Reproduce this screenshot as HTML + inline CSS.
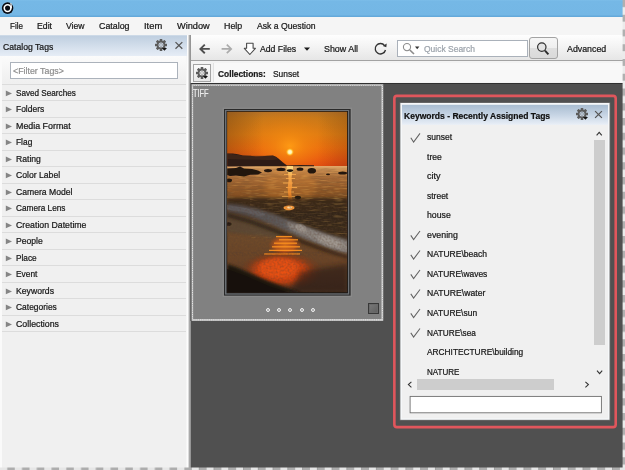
<!DOCTYPE html>
<html>
<head>
<meta charset="utf-8">
<title>Catalog</title>
<style>
html,body{margin:0;padding:0;}
body{width:625px;height:470px;overflow:hidden;position:relative;background:#505050;font-family:"Liberation Sans",sans-serif;font-size:10px;color:#1e1e1e;}
.abs{position:absolute;}
.t{position:absolute;display:block;white-space:nowrap;line-height:12px;height:12px;transform-origin:0 50%;-webkit-text-stroke:0.22px currentColor;}
.ln{position:absolute;left:2px;width:184px;height:1px;background:#dcdcdc;}
#title{left:0;top:0;width:625px;height:17px;background:linear-gradient(#7cbde9 0,#75b8e6 1.5px,#74b7e5 15px,#64a9da 16px,#64a9da 17px);}
#menu{left:0;top:17px;width:625px;height:18px;background:#f5f5f5;}
#side{left:0;top:35px;width:189px;height:435px;background:#f0f0f0;}
#sideL{left:0;top:35px;width:2px;height:435px;background:#fafafa;}
#sideR{left:186px;top:35px;width:2px;height:435px;background:linear-gradient(90deg,#f4f4f4,#fff);}
#sidehdr{left:0;top:35px;width:187px;height:21px;background:linear-gradient(#dbe4ee 0,#bfcfe0 1px,#e6edf6 100%);}
#filterbg{left:2px;top:56px;width:184px;height:27px;background:linear-gradient(#fbfbfb,#efefef);}
#filter{left:10px;top:62px;width:168px;height:17px;background:#fff;border:1px solid #abb2bb;box-sizing:border-box;}
#vsep{left:188px;top:35px;width:3px;height:435px;background:linear-gradient(90deg,#dadada 0,#dadada 1px,#aaa 1px,#aaa 2px,#969696 2px);}
#tool{left:191px;top:35px;width:434px;height:25px;background:linear-gradient(#fefefe,#f4f4f4 45%,#e6e6e6);}
#toolb{left:191px;top:60px;width:434px;height:1px;background:#a2a2a2;}
#coll{left:191px;top:61px;width:434px;height:22px;background:#f3f3f3;}
#collb{left:191px;top:83px;width:434px;height:1px;background:#303030;}
#gbtn{left:193px;top:64px;width:18px;height:18px;box-sizing:border-box;border:1px solid #a4a4a4;background:linear-gradient(#fafafa,#e8e8e8);}
#crumb{left:213px;top:63px;width:412px;height:19px;background:#f8f8f8;border-left:1px solid #e2e2e2;}
#thumb{left:191px;top:84px;width:192px;height:237px;background:#808080;border:1px solid #c9c9c9;box-sizing:border-box;}
#thumbd{left:193px;top:86px;width:188px;height:233px;border:1px dashed #ededed;box-sizing:border-box;}
#frame{left:224px;top:109px;width:127px;height:187px;background:#2c2c2c;}
#frame2{left:225px;top:110px;width:125px;height:185px;background:#666;}
#frame3{left:227px;top:112px;width:121px;height:181px;background:#1c1c1c;}
#chk{left:368px;top:303px;width:11px;height:11px;box-sizing:border-box;border:1px solid #383838;background:linear-gradient(135deg,#7a7a7a,#5e5e5e);box-shadow:inset 0 0 0 1px #6a6a6a;}
.dot{position:absolute;top:308px;width:4px;height:4px;box-sizing:border-box;border:1px solid #f0f0f0;border-radius:2px;background:#999;}
#pred{left:393px;top:95px;width:224px;height:334px;border:3px solid #d95a5e;border-radius:4px;box-sizing:border-box;}
#panel{left:400px;top:103px;width:210px;height:317px;background:#f0f0f0;border:1px solid #e4e4e4;border-top:2px solid #ececec;box-sizing:border-box;}
#phdr{left:401px;top:105px;width:208px;height:20px;background:linear-gradient(#bccce0,#e8eef7);}
#vtrack{left:593px;top:126px;width:12px;height:252px;background:#f0f0f0;}
#vthumb{left:594px;top:140px;width:11px;height:205px;background:#cdcdcd;}
#hthumb{left:417px;top:379px;width:137px;height:11px;background:#cdcdcd;}

#sbox{left:397px;top:40px;width:131px;height:17px;background:#fff;border:1px solid #aab1ba;box-sizing:border-box;}
#sbtn{left:529px;top:37px;width:29px;height:22px;box-sizing:border-box;border:1px solid #a3a3a3;border-radius:3px;background:linear-gradient(#f6f6f6 0,#efefef 48%,#dfdfdf 52%,#dadada 100%);}
</style>
</head>
<body>
<div id="title" class="abs"></div>
<svg class="abs" style="left:0;top:0" width="17" height="17" viewBox="0 0 17 17"><circle cx="7.6" cy="8.1" r="6.3" fill="#8cc6ee" opacity=".6"/><circle cx="7.6" cy="8.1" r="5.8" fill="#080c14"/><circle cx="7.6" cy="8.1" r="3.35" fill="none" stroke="#fff" stroke-width="1.6"/><path d="M11.35 8.100 C11.5 6.200 11.300 4.600 10.700 3.100" stroke="#fff" stroke-width="1.15" fill="none"/></svg>
<div id="menu" class="abs"></div>
<div id="side" class="abs"></div>
<div id="sideL" class="abs"></div>
<div id="sideR" class="abs"></div>
<div id="sidehdr" class="abs"></div>
<div id="filterbg" class="abs"></div>
<div id="filter" class="abs"></div>
<div class="ln" style="top:83.5px"></div>
<div class="ln" style="top:100.0px"></div>
<div class="ln" style="top:116.5px"></div>
<div class="ln" style="top:133.0px"></div>
<div class="ln" style="top:149.5px"></div>
<div class="ln" style="top:166.0px"></div>
<div class="ln" style="top:182.5px"></div>
<div class="ln" style="top:199.0px"></div>
<div class="ln" style="top:215.5px"></div>
<div class="ln" style="top:232.0px"></div>
<div class="ln" style="top:248.5px"></div>
<div class="ln" style="top:265.0px"></div>
<div class="ln" style="top:281.5px"></div>
<div class="ln" style="top:298.0px"></div>
<div class="ln" style="top:314.5px"></div>
<div class="ln" style="top:331.0px"></div>
<svg class="abs" style="left:5px;top:89.9px" width="8" height="8" viewBox="0 0 8 8"><path d="M0.8 0.6 L7 3.4 L0.8 6.2 Z" fill="#858585"/></svg>
<svg class="abs" style="left:5px;top:106.4px" width="8" height="8" viewBox="0 0 8 8"><path d="M0.8 0.6 L7 3.4 L0.8 6.2 Z" fill="#858585"/></svg>
<svg class="abs" style="left:5px;top:122.9px" width="8" height="8" viewBox="0 0 8 8"><path d="M0.8 0.6 L7 3.4 L0.8 6.2 Z" fill="#858585"/></svg>
<svg class="abs" style="left:5px;top:139.4px" width="8" height="8" viewBox="0 0 8 8"><path d="M0.8 0.6 L7 3.4 L0.8 6.2 Z" fill="#858585"/></svg>
<svg class="abs" style="left:5px;top:155.9px" width="8" height="8" viewBox="0 0 8 8"><path d="M0.8 0.6 L7 3.4 L0.8 6.2 Z" fill="#858585"/></svg>
<svg class="abs" style="left:5px;top:172.4px" width="8" height="8" viewBox="0 0 8 8"><path d="M0.8 0.6 L7 3.4 L0.8 6.2 Z" fill="#858585"/></svg>
<svg class="abs" style="left:5px;top:188.9px" width="8" height="8" viewBox="0 0 8 8"><path d="M0.8 0.6 L7 3.4 L0.8 6.2 Z" fill="#858585"/></svg>
<svg class="abs" style="left:5px;top:205.4px" width="8" height="8" viewBox="0 0 8 8"><path d="M0.8 0.6 L7 3.4 L0.8 6.2 Z" fill="#858585"/></svg>
<svg class="abs" style="left:5px;top:221.9px" width="8" height="8" viewBox="0 0 8 8"><path d="M0.8 0.6 L7 3.4 L0.8 6.2 Z" fill="#858585"/></svg>
<svg class="abs" style="left:5px;top:238.4px" width="8" height="8" viewBox="0 0 8 8"><path d="M0.8 0.6 L7 3.4 L0.8 6.2 Z" fill="#858585"/></svg>
<svg class="abs" style="left:5px;top:254.9px" width="8" height="8" viewBox="0 0 8 8"><path d="M0.8 0.6 L7 3.4 L0.8 6.2 Z" fill="#858585"/></svg>
<svg class="abs" style="left:5px;top:271.4px" width="8" height="8" viewBox="0 0 8 8"><path d="M0.8 0.6 L7 3.4 L0.8 6.2 Z" fill="#858585"/></svg>
<svg class="abs" style="left:5px;top:287.9px" width="8" height="8" viewBox="0 0 8 8"><path d="M0.8 0.6 L7 3.4 L0.8 6.2 Z" fill="#858585"/></svg>
<svg class="abs" style="left:5px;top:304.4px" width="8" height="8" viewBox="0 0 8 8"><path d="M0.8 0.6 L7 3.4 L0.8 6.2 Z" fill="#858585"/></svg>
<svg class="abs" style="left:5px;top:320.9px" width="8" height="8" viewBox="0 0 8 8"><path d="M0.8 0.6 L7 3.4 L0.8 6.2 Z" fill="#858585"/></svg>
<div id="vsep" class="abs"></div>
<div id="tool" class="abs"></div>
<div id="toolb" class="abs"></div>
<div id="coll" class="abs"></div>
<div id="crumb" class="abs"></div>
<div id="collb" class="abs"></div>
<div id="gbtn" class="abs"></div>
<div id="sbox" class="abs"></div>
<div id="sbtn" class="abs"></div>
<svg class="abs" style="left:0;top:0;overflow:visible" width="1" height="1">
<!-- back / forward arrows -->
<path d="M209.8 48.9 H201 M204.8 44.6 L200.4 48.9 L204.8 53.2" stroke="#4e4e4e" stroke-width="1.9" fill="none"/>
<path d="M221.6 48.9 H230.6 M226.8 44.6 L231.2 48.9 L226.8 53.2" stroke="#ababab" stroke-width="1.7" fill="none"/>
<!-- add files -->
<path d="M246.6 43.3 H253.1 V48.3 H255.4 L249.85 54.5 L244.3 48.3 H246.6 Z" fill="#fff" stroke="#4a4a4a" stroke-width="1.1" stroke-linejoin="round"/>
<path d="M304 47.4 H310 L307 50.8 Z" fill="#1a1a1a"/>
<!-- refresh -->
<path d="M384.6 45.6 A5.2 5.2 0 1 0 385.5 50" stroke="#333" stroke-width="1.35" fill="none"/>
<path d="M386.7 43.4 L386.3 47.3 L382.8 46 Z" fill="#333"/>
<!-- quick search magnifier -->
<circle cx="407" cy="47.1" r="3.6" fill="none" stroke="#8c8c8c" stroke-width="1.1"/>
<path d="M409.8 50 L414 54" stroke="#8c8c8c" stroke-width="1.7"/>
<path d="M415 46.6 H419.4 L417.2 49.2 Z" fill="#333"/>
<!-- search button magnifier -->
<circle cx="541.8" cy="47.1" r="4.2" fill="#e4e4e4" stroke="#2e2e2e" stroke-width="1.2"/>
<path d="M545 50.6 L548.4 54.4" stroke="#2a2a2a" stroke-width="1.9"/>
</svg>
<svg class="abs" style="left:161.20px;top:44.95px;overflow:visible" width="1" height="1"><g fill="#5c5c5c"><rect x="-1.3" y="-6.00" width="2.6" height="2.4" rx="0.3" transform="rotate(0)"/><rect x="-1.3" y="-6.00" width="2.6" height="2.4" rx="0.3" transform="rotate(45)"/><rect x="-1.3" y="-6.00" width="2.6" height="2.4" rx="0.3" transform="rotate(90)"/><rect x="-1.3" y="-6.00" width="2.6" height="2.4" rx="0.3" transform="rotate(135)"/><rect x="-1.3" y="-6.00" width="2.6" height="2.4" rx="0.3" transform="rotate(180)"/><rect x="-1.3" y="-6.00" width="2.6" height="2.4" rx="0.3" transform="rotate(225)"/><rect x="-1.3" y="-6.00" width="2.6" height="2.4" rx="0.3" transform="rotate(270)"/><rect x="-1.3" y="-6.00" width="2.6" height="2.4" rx="0.3" transform="rotate(315)"/><circle r="3.45" fill="none" stroke="#5c5c5c" stroke-width="1.9"/><circle r="1.45" fill="none" stroke="#5c5c5c" stroke-width="0.7" opacity=".6"/></g><path d="M0.900 2.900 L6.0 2.900 L3.45 5.800 Z" fill="#161616"/></svg>
<svg class="abs" style="left:0;top:0;overflow:visible" width="1" height="1"><path d="M175.50 42.10 L182.30 48.80 M182.30 42.10 L175.50 48.80" stroke="#555" stroke-width="1.25" fill="none"/></svg>
<svg class="abs" style="left:201.90px;top:72.90px;overflow:visible" width="1" height="1"><g fill="#5c5c5c"><rect x="-1.3" y="-6.00" width="2.6" height="2.4" rx="0.3" transform="rotate(0)"/><rect x="-1.3" y="-6.00" width="2.6" height="2.4" rx="0.3" transform="rotate(45)"/><rect x="-1.3" y="-6.00" width="2.6" height="2.4" rx="0.3" transform="rotate(90)"/><rect x="-1.3" y="-6.00" width="2.6" height="2.4" rx="0.3" transform="rotate(135)"/><rect x="-1.3" y="-6.00" width="2.6" height="2.4" rx="0.3" transform="rotate(180)"/><rect x="-1.3" y="-6.00" width="2.6" height="2.4" rx="0.3" transform="rotate(225)"/><rect x="-1.3" y="-6.00" width="2.6" height="2.4" rx="0.3" transform="rotate(270)"/><rect x="-1.3" y="-6.00" width="2.6" height="2.4" rx="0.3" transform="rotate(315)"/><circle r="3.45" fill="none" stroke="#5c5c5c" stroke-width="1.9"/><circle r="1.45" fill="none" stroke="#5c5c5c" stroke-width="0.7" opacity=".6"/></g><path d="M0.900 2.900 L6.0 2.900 L3.45 5.800 Z" fill="#161616"/></svg>
<svg class="abs" style="left:186px;top:80px" width="202" height="246" viewBox="186 80 202 246">
<rect x="190.5" y="83" width="1.1" height="238" fill="#3a3a3a"/>
<rect x="191.6" y="84.4" width="191.6" height="236.4" fill="#e6e6e6"/>
<rect x="191.6" y="84.4" width="191.6" height="0.8" fill="#b4b4b4"/>
<rect x="193.1" y="85.9" width="188.5" height="233.2" fill="#818181"/>
<path d="M192.4 86 V319.600 H382.400 V85.200 H192" stroke="#9c9c9c" stroke-width="0.8" stroke-dasharray="1.1 1.1" fill="none" transform="translate(0.3 0.3)"/>
</svg>
<svg class="abs" style="left:220px;top:105px" width="136" height="195" viewBox="220 105 136 195">
<defs>
<linearGradient id="sky" x1="0" y1="0" x2="0" y2="1">
<stop offset="0" stop-color="#b47228"/><stop offset=".12" stop-color="#c6781a"/><stop offset=".42" stop-color="#de7c12"/><stop offset=".66" stop-color="#ec6c0e"/><stop offset=".86" stop-color="#ea5410"/><stop offset="1" stop-color="#e04410"/>
</linearGradient>
<radialGradient id="glow" cx="289.9" cy="146" r="40" gradientUnits="userSpaceOnUse" gradientTransform="translate(289.9 146) scale(1.25 1) translate(-289.9 -146)">
<stop offset="0" stop-color="#ff9c14" stop-opacity=".95"/><stop offset=".3" stop-color="#f68c10" stop-opacity=".6"/><stop offset=".7" stop-color="#ee8010" stop-opacity=".2"/><stop offset="1" stop-color="#f08010" stop-opacity="0"/>
</radialGradient>
<radialGradient id="sun" cx="289.9" cy="152" r="4.2" gradientUnits="userSpaceOnUse">
<stop offset="0" stop-color="#fffbe0"/><stop offset=".45" stop-color="#fff0a0"/><stop offset=".7" stop-color="#ffc030" stop-opacity=".8"/><stop offset="1" stop-color="#ff9a10" stop-opacity="0"/>
</radialGradient>
<linearGradient id="vig" x1="0" y1="0" x2="1" y2="0">
<stop offset="0" stop-color="#5a3010" stop-opacity=".35"/><stop offset=".3" stop-color="#5a3010" stop-opacity="0"/><stop offset=".75" stop-color="#5a3010" stop-opacity="0"/><stop offset="1" stop-color="#5a3010" stop-opacity=".25"/>
</linearGradient>
<linearGradient id="sea" x1="0" y1="0" x2="0" y2="1">
<stop offset="0" stop-color="#e2aa6c"/><stop offset=".06" stop-color="#c88c50"/><stop offset=".16" stop-color="#a86c38"/><stop offset=".35" stop-color="#8e5626"/><stop offset=".6" stop-color="#683e1c"/><stop offset="1" stop-color="#3a2416"/>
</linearGradient>
<linearGradient id="sand" x1="0" y1="0" x2="0" y2="1">
<stop offset="0" stop-color="#4a3422"/><stop offset=".3" stop-color="#6e4a2a"/><stop offset=".6" stop-color="#6a4426"/><stop offset="1" stop-color="#4a3020"/>
</linearGradient>
<linearGradient id="refl" x1="0" y1="0" x2="0" y2="1">
<stop offset="0" stop-color="#ffd070"/><stop offset=".15" stop-color="#ffb050"/><stop offset=".6" stop-color="#f08828"/><stop offset="1" stop-color="#e06818" stop-opacity=".6"/>
</linearGradient>
<radialGradient id="r2" cx=".5" cy=".5" r=".5">
<stop offset="0" stop-color="#f07a18"/><stop offset=".6" stop-color="#d85a14" stop-opacity=".8"/><stop offset="1" stop-color="#a04010" stop-opacity="0"/>
</radialGradient>
<radialGradient id="r3" cx=".5" cy=".5" r=".5">
<stop offset="0" stop-color="#e84a10"/><stop offset=".5" stop-color="#d04010" stop-opacity=".85"/><stop offset="1" stop-color="#803010" stop-opacity="0"/>
</radialGradient>
<filter id="b1" x="-20%" y="-20%" width="140%" height="140%"><feGaussianBlur stdDeviation="0.6"/></filter>
<filter id="b2" x="-20%" y="-20%" width="140%" height="140%"><feGaussianBlur stdDeviation="1.4"/></filter>
<filter id="b3" x="-20%" y="-20%" width="140%" height="140%"><feGaussianBlur stdDeviation="2.6"/></filter>
<filter id="tx1" x="0" y="0" width="100%" height="100%"><feTurbulence type="fractalNoise" baseFrequency="0.06 0.55" numOctaves="2" seed="4"/><feColorMatrix type="matrix" values="0 0 0 0 0.16  0 0 0 0 0.08  0 0 0 0 0.03  1.6 0 0 0 -0.66"/></filter>
<filter id="tx2" x="0" y="0" width="100%" height="100%"><feTurbulence type="fractalNoise" baseFrequency="0.09 0.6" numOctaves="2" seed="11"/><feColorMatrix type="matrix" values="0 0 0 0 0.96  0 0 0 0 0.52  0 0 0 0 0.12  0 1.9 0 0 -0.95"/></filter>
<filter id="tx3" x="0" y="0" width="100%" height="100%"><feTurbulence type="fractalNoise" baseFrequency="0.5 0.5" numOctaves="2" seed="7"/><feColorMatrix type="matrix" values="0 0 0 0 0.1  0 0 0 0 0.05  0 0 0 0 0.03  1.5 0 0 0 -0.55"/></filter>
<linearGradient id="foam" x1="0" y1="0" x2="1" y2="0"><stop offset="0" stop-color="#4c484a"/><stop offset=".45" stop-color="#5e5a5a"/><stop offset="1" stop-color="#7c7672"/></linearGradient>
<clipPath id="pc"><rect x="227.2" y="111.7" width="119.9" height="180.6"/></clipPath>
</defs>
<rect x="223.2" y="108.2" width="128.2" height="188.2" fill="none" stroke="#8b8b8b" stroke-width="1"/>
<rect x="224" y="109" width="126.6" height="186.6" fill="#2a2a2a"/>
<rect x="225" y="110" width="124.2" height="184.6" fill="#6c7074"/>
<rect x="226.5" y="111" width="121.4" height="182.3" fill="#161210"/>
<g clip-path="url(#pc)">
<rect x="227" y="111" width="121" height="56" fill="url(#sky)"/>
<rect x="227" y="111" width="121" height="56" fill="url(#glow)"/>
<rect x="227" y="111" width="121" height="56" fill="url(#vig)"/>
<circle cx="289.9" cy="152" r="4.2" fill="url(#sun)"/>
<!-- sea -->
<rect x="227" y="166" width="121" height="70" fill="url(#sea)"/>
<rect x="227" y="168" width="121" height="68" filter="url(#tx1)" opacity=".7"/>
<rect x="227" y="168" width="121" height="46" filter="url(#tx2)" opacity=".5"/>
<ellipse cx="290" cy="186" rx="26" ry="20" fill="#e08a30" opacity=".25" filter="url(#b3)"/>
<g stroke="#ffb050" stroke-width="1" opacity=".75" filter="url(#b1)"><path d="M284 174.500 H296"/><path d="M286 178.500 H295"/><path d="M283 183 H293"/><path d="M286 187.500 H297"/><path d="M284 192 H294"/><path d="M282 196.500 H296"/><path d="M285 201 H295"/></g>
<!-- headland -->
<path d="M227 153.4 L233 153.6 L238 154.2 L243 155.6 L250 155.8 L256 156.4 L262 156.2 L268 155.8 L273 155.6 L276 156.8 L279 159 L283 162.4 L287 165.4 L300 165 L314 165.2 L314 166.2 L227 166.4 Z" fill="#2e1c16" filter="url(#b1)"/>
<path d="M227 153.6 L243 155.8 L273 155.8 L279 159 L272 160 L227 159 Z" fill="#4a2c1c" opacity=".6" filter="url(#b1)"/>
<!-- reflection -->
<rect x="286.6" y="166" width="6.4" height="6" fill="#ffd880" filter="url(#b1)"/>
<path d="M288 171 L292.4 171 L291.6 178 L292.2 186 L291 192 L292 198 L293.600 204 L291 211 L285.5 211 L287.4 203 L288.4 196 L287.600 188 L288.6 180 Z" fill="url(#refl)" filter="url(#b1)" opacity=".85"/>
<!-- rocks -->
<g fill="#20140e" filter="url(#b1)">
<path d="M227 168.5 L236 168 L240 166.6 L244 168.4 L252 169 L258 170.4 L262 172.6 L258 174.4 L250 174.8 L244 176.4 L236 175.6 L230 176 L227 175 Z"/>
<ellipse cx="268" cy="170.6" rx="4" ry="1.6"/><ellipse cx="281" cy="169.4" rx="4.5" ry="1.6"/><ellipse cx="290" cy="170.6" rx="3.2" ry="1.3"/>
<ellipse cx="300" cy="169.2" rx="3.4" ry="1.6"/><ellipse cx="311.8" cy="170.8" rx="4.2" ry="2.8"/><ellipse cx="342.6" cy="173" rx="4.4" ry="1.5"/>
<ellipse cx="229" cy="180.4" rx="3" ry="1.8"/><ellipse cx="297.8" cy="197.6" rx="3.2" ry="1.8"/><ellipse cx="328" cy="174.4" rx="2" ry=".8"/>
</g>
<!-- lower half -->
<rect x="227" y="212" width="121" height="81" fill="url(#sand)"/>
<path d="M227 198 L348 198 L348 246 L320 236 L296 226 L270 214 L244 208 L227 206 Z" fill="#2e2018" opacity=".8" filter="url(#b2)"/>
<rect x="250" y="198" width="98" height="40" filter="url(#tx2)" opacity=".35"/>
<ellipse cx="289" cy="207.8" rx="5.5" ry="2.4" fill="#ff9c38" filter="url(#b1)"/><ellipse cx="289.5" cy="207.600" rx="2.6" ry="1.1" fill="#ffd8a0" filter="url(#b1)"/>
<!-- water under wave left -->
<path d="M227 212 L250 218 L280 230 L300 240 L262 236 L227 232 Z" fill="#5c4834" opacity=".9" filter="url(#b2)"/>
<ellipse cx="228.5" cy="224" rx="3" ry="1.8" fill="#20140e" filter="url(#b1)"/>
<!-- wave foam -->
<path d="M227 203.500 L240 205 L258 209 L276 215 L294 222 L312 229 L330 235 L348 240 L348 254 L336 251 L320 245 L304 239 L288 232 L270 224 L252 217 L236 213 L227 211.500 Z" fill="url(#foam)" filter="url(#b2)"/>
<path d="M286 222 L300 225 L316 231 L332 237 L348 243 L348 252 L334 248 L318 242 L302 235 L290 229 Z" fill="#989089" opacity=".75" filter="url(#b2)"/>
<path d="M227 205 L246 208 L266 214 L262 217 L244 212 L227 209.500 Z" fill="#6c686a" opacity=".5" filter="url(#b1)"/>
<ellipse cx="301" cy="228" rx="6" ry="3.4" fill="#a49c94" opacity=".7" filter="url(#b1)" transform="rotate(22 301 228)"/>
<ellipse cx="330" cy="242" rx="13" ry="4.6" fill="#aaa29a" opacity=".6" filter="url(#b2)" transform="rotate(20 330 242)"/>
<rect x="227" y="202" width="121" height="54" filter="url(#tx3)" opacity=".55"/>
<path d="M227 213 L250 219.500 L276 229 L300 239 L324 248 L348 256 L348 259 L324 251.500 L300 243 L276 233 L250 223.500 L227 217 Z" fill="#22160f" opacity=".65" filter="url(#b2)"/>
<!-- orange reflection on wet sand -->
<ellipse cx="285" cy="245" rx="17" ry="11" fill="url(#r2)" opacity=".8"/>
<g stroke="#ff9420" stroke-width="1.3" opacity=".9" filter="url(#b1)">
<path d="M276 236.600 H292"/><path d="M279 239.800 H298"/><path d="M274 243.200 H297"/><path d="M272 246.800 H300"/><path d="M269 250.400 H302"/><path d="M264 254 H300"/>
</g>
<ellipse cx="281" cy="271" rx="42" ry="20" fill="url(#r3)"/>
<ellipse cx="280" cy="270" rx="28" ry="13" fill="#d8460f" opacity=".55" filter="url(#b3)"/>
<ellipse cx="279" cy="268" rx="20" ry="10" fill="#f05614" opacity=".6" filter="url(#b2)"/>
<rect x="227" y="252" width="121" height="41" filter="url(#tx3)" opacity=".5"/>
<!-- right sand darker bottom -->
<path d="M300 272 L348 264 L348 293 L290 293 Z" fill="#2c1c14" opacity=".6" filter="url(#b3)"/>
<!-- pebbles -->
<path d="M227 264 L236 267 L250 273 L266 280 L284 287 L302 293 L227 293 Z" fill="#1c120e" filter="url(#b2)"/>
<path d="M227 269 L246 276 L270 286.500 L290 293 L227 293 Z" fill="#17100c"/>
</g>
</svg>

<div id="chk" class="abs"></div>
<div class="dot" style="left:266px"></div><div class="dot" style="left:277px"></div><div class="dot" style="left:288px"></div><div class="dot" style="left:300px"></div><div class="dot" style="left:311px"></div>
<svg class="abs" style="left:388px;top:90px" width="234" height="344" viewBox="388 90 234 344">
<defs><linearGradient id="phg" x1="0" y1="0" x2="0" y2="1"><stop offset="0" stop-color="#a9bdd1"/><stop offset=".5" stop-color="#c6d4e4"/><stop offset="1" stop-color="#e9eff7"/></linearGradient></defs>
<rect x="394.35" y="95.9" width="221.35" height="331.2" rx="2.6" fill="none" stroke="#e0565c" stroke-width="2.6"/>
<rect x="399.7" y="102.3" width="210.6" height="318.2" fill="#8a8a8a" opacity=".55"/>
<rect x="400.4" y="103" width="209.100" height="316.800" fill="#f6f8fa"/>
<rect x="402" y="104.800" width="206" height="313.600" fill="#f0f0f0"/>
<rect x="402" y="104.800" width="206" height="20" fill="url(#phg)"/>
</svg>
<div id="vtrack" class="abs"></div>
<div id="vthumb" class="abs"></div>
<div id="hthumb" class="abs"></div>
<svg class="abs" style="left:405px;top:392px" width="202" height="26" viewBox="405 392 202 26"><rect x="410.1" y="396.4" width="191.300" height="16.400" fill="#fff" stroke="#6e6e6e" stroke-width="0.9"/></svg>
<svg class="abs" style="left:582.20px;top:113.90px;overflow:visible" width="1" height="1"><g fill="#5c5c5c"><rect x="-1.3" y="-6.00" width="2.6" height="2.4" rx="0.3" transform="rotate(0)"/><rect x="-1.3" y="-6.00" width="2.6" height="2.4" rx="0.3" transform="rotate(45)"/><rect x="-1.3" y="-6.00" width="2.6" height="2.4" rx="0.3" transform="rotate(90)"/><rect x="-1.3" y="-6.00" width="2.6" height="2.4" rx="0.3" transform="rotate(135)"/><rect x="-1.3" y="-6.00" width="2.6" height="2.4" rx="0.3" transform="rotate(180)"/><rect x="-1.3" y="-6.00" width="2.6" height="2.4" rx="0.3" transform="rotate(225)"/><rect x="-1.3" y="-6.00" width="2.6" height="2.4" rx="0.3" transform="rotate(270)"/><rect x="-1.3" y="-6.00" width="2.6" height="2.4" rx="0.3" transform="rotate(315)"/><circle r="3.45" fill="none" stroke="#5c5c5c" stroke-width="1.9"/><circle r="1.45" fill="none" stroke="#5c5c5c" stroke-width="0.7" opacity=".6"/></g><path d="M0.900 2.900 L6.0 2.900 L3.45 5.800 Z" fill="#161616"/></svg>
<svg class="abs" style="left:0;top:0;overflow:visible" width="1" height="1"><path d="M595.10 111.10 L601.90 117.90 M601.90 111.10 L595.10 117.90" stroke="#555" stroke-width="1.25" fill="none"/></svg>
<svg class="abs" style="left:0;top:0;overflow:visible" width="1" height="1"><path d="M410.8 137.80 L413.6 142.00 L420.0 133.40" stroke="#626262" stroke-width="1.05" fill="none" stroke-linejoin="miter"/><path d="M410.8 235.35 L413.6 239.55 L420.0 230.95" stroke="#626262" stroke-width="1.05" fill="none" stroke-linejoin="miter"/><path d="M410.8 254.86 L413.6 259.06 L420.0 250.46" stroke="#626262" stroke-width="1.05" fill="none" stroke-linejoin="miter"/><path d="M410.8 274.37 L413.6 278.57 L420.0 269.97" stroke="#626262" stroke-width="1.05" fill="none" stroke-linejoin="miter"/><path d="M410.8 293.88 L413.6 298.08 L420.0 289.48" stroke="#626262" stroke-width="1.05" fill="none" stroke-linejoin="miter"/><path d="M410.8 313.39 L413.6 317.59 L420.0 308.99" stroke="#626262" stroke-width="1.05" fill="none" stroke-linejoin="miter"/><path d="M410.8 332.90 L413.6 337.10 L420.0 328.50" stroke="#626262" stroke-width="1.05" fill="none" stroke-linejoin="miter"/></svg>
<svg class="abs" style="left:0;top:0;overflow:visible" width="1" height="1">
<path d="M596.6 135.4 L599.2 132.4 L601.8 135.4" stroke="#333" stroke-width="1.1" fill="none"/>
<path d="M597 370.6 L599.6 373.6 L602.2 370.6" stroke="#333" stroke-width="1.1" fill="none"/>
<path d="M411.4 381.900 L408.4 384.600 L411.4 387.300" stroke="#333" stroke-width="1.1" fill="none"/>
<path d="M585.400 381.900 L588.400 384.600 L585.400 387.300" stroke="#333" stroke-width="1.1" fill="none"/>
</svg>
<span class="t" id="m1" style="left:9.50px;top:20.20px;font-size:9px;color:#161616;transform:scaleX(0.8956);">File</span>
<span class="t" id="m2" style="left:37.00px;top:20.20px;font-size:9px;color:#161616;transform:scaleX(0.9668);">Edit</span>
<span class="t" id="m3" style="left:66.00px;top:20.20px;font-size:9px;color:#161616;transform:scaleX(0.9556);">View</span>
<span class="t" id="m4" style="left:99.30px;top:20.20px;font-size:9px;color:#161616;transform:scaleX(0.9829);">Catalog</span>
<span class="t" id="m5" style="left:143.80px;top:20.20px;font-size:9px;color:#161616;transform:scaleX(1.0391);">Item</span>
<span class="t" id="m6" style="left:176.70px;top:20.20px;font-size:9px;color:#161616;transform:scaleX(1.0214);">Window</span>
<span class="t" id="m7" style="left:223.80px;top:20.20px;font-size:9px;color:#161616;transform:scaleX(0.9830);">Help</span>
<span class="t" id="m8" style="left:257.00px;top:20.20px;font-size:9px;color:#161616;transform:scaleX(0.9602);">Ask a Question</span>
<span class="t" id="h1" style="left:3.00px;top:41.20px;font-size:9px;color:#161616;transform:scaleX(0.9604);">Catalog Tags</span>
<span class="t" id="f1" style="left:12.50px;top:64.60px;font-size:9px;color:#8e8e8e;transform:scaleX(0.9812);">&lt;Filter Tags&gt;</span>
<span class="t" id="s0" style="left:16.00px;top:86.90px;font-size:9px;color:#161616;transform:scaleX(0.9054);">Saved Searches</span>
<span class="t" id="s1" style="left:16.00px;top:103.40px;font-size:9px;color:#161616;transform:scaleX(0.9395);">Folders</span>
<span class="t" id="s2" style="left:16.00px;top:119.90px;font-size:9px;color:#161616;transform:scaleX(0.9850);">Media Format</span>
<span class="t" id="s3" style="left:16.00px;top:136.40px;font-size:9px;color:#161616;transform:scaleX(0.9306);">Flag</span>
<span class="t" id="s4" style="left:16.00px;top:152.90px;font-size:9px;color:#161616;transform:scaleX(0.9571);">Rating</span>
<span class="t" id="s5" style="left:16.00px;top:169.40px;font-size:9px;color:#161616;transform:scaleX(0.9580);">Color Label</span>
<span class="t" id="s6" style="left:16.00px;top:185.90px;font-size:9px;color:#161616;transform:scaleX(0.9571);">Camera Model</span>
<span class="t" id="s7" style="left:16.00px;top:202.40px;font-size:9px;color:#161616;transform:scaleX(0.9161);">Camera Lens</span>
<span class="t" id="s8" style="left:16.00px;top:218.90px;font-size:9px;color:#161616;transform:scaleX(0.9718);">Creation Datetime</span>
<span class="t" id="s9" style="left:16.00px;top:235.40px;font-size:9px;color:#161616;transform:scaleX(0.9561);">People</span>
<span class="t" id="s10" style="left:16.00px;top:251.90px;font-size:9px;color:#161616;transform:scaleX(0.9194);">Place</span>
<span class="t" id="s11" style="left:16.00px;top:268.40px;font-size:9px;color:#161616;transform:scaleX(0.9298);">Event</span>
<span class="t" id="s12" style="left:16.00px;top:284.90px;font-size:9px;color:#161616;transform:scaleX(0.9616);">Keywords</span>
<span class="t" id="s13" style="left:16.00px;top:301.40px;font-size:9px;color:#161616;transform:scaleX(0.9373);">Categories</span>
<span class="t" id="s14" style="left:16.00px;top:317.90px;font-size:9px;color:#161616;transform:scaleX(0.9766);">Collections</span>
<span class="t" id="t1" style="left:260.20px;top:43.20px;font-size:9px;color:#161616;transform:scaleX(0.9645);">Add Files</span>
<span class="t" id="t2" style="left:323.50px;top:43.20px;font-size:9px;color:#161616;transform:scaleX(0.9875);">Show All</span>
<span class="t" id="t3" style="left:424.30px;top:43.20px;font-size:9px;color:#9ca3ab;transform:scaleX(0.9420);">Quick Search</span>
<span class="t" id="t4" style="left:567.40px;top:43.20px;font-size:9px;color:#161616;transform:scaleX(0.9792);">Advanced</span>
<span class="t" id="c1" style="left:217.80px;top:67.70px;font-size:9px;color:#161616;transform:scaleX(0.9279);font-weight:bold;">Collections:</span>
<span class="t" id="c2" style="left:272.80px;top:67.70px;font-size:9px;color:#161616;transform:scaleX(0.9347);">Sunset</span>
<span class="t" id="tf" style="left:193.00px;top:88.20px;font-size:10px;color:#ececec;transform:scaleX(0.7390);">TIFF</span>
<span class="t" id="k0" style="left:404.00px;top:109.80px;font-size:9px;color:#101010;transform:scaleX(0.9484);font-weight:bold;">Keywords - Recently Assigned Tags</span>
<span class="t" id="k1" style="left:427.30px;top:131.40px;font-size:9px;color:#161616;transform:scaleX(0.9461);">sunset</span>
<span class="t" id="k2" style="left:427.30px;top:150.91px;font-size:9px;color:#161616;transform:scaleX(0.9539);">tree</span>
<span class="t" id="k3" style="left:427.30px;top:170.42px;font-size:9px;color:#161616;transform:scaleX(1.0074);">city</span>
<span class="t" id="k4" style="left:427.30px;top:189.93px;font-size:9px;color:#161616;transform:scaleX(0.9416);">street</span>
<span class="t" id="k5" style="left:427.30px;top:209.44px;font-size:9px;color:#161616;transform:scaleX(0.9702);">house</span>
<span class="t" id="k6" style="left:427.30px;top:228.95px;font-size:9px;color:#161616;transform:scaleX(0.9800);">evening</span>
<span class="t" id="k7" style="left:427.30px;top:248.46px;font-size:9px;color:#161616;transform:scaleX(0.9486);">NATURE\beach</span>
<span class="t" id="k8" style="left:427.30px;top:267.97px;font-size:9px;color:#161616;transform:scaleX(0.9369);">NATURE\waves</span>
<span class="t" id="k9" style="left:427.30px;top:287.48px;font-size:9px;color:#161616;transform:scaleX(0.9582);">NATURE\water</span>
<span class="t" id="k10" style="left:427.30px;top:306.99px;font-size:9px;color:#161616;transform:scaleX(0.9389);">NATURE\sun</span>
<span class="t" id="k11" style="left:427.30px;top:326.50px;font-size:9px;color:#161616;transform:scaleX(0.9146);">NATURE\sea</span>
<span class="t" id="k12" style="left:427.30px;top:346.01px;font-size:9px;color:#161616;transform:scaleX(0.9247);">ARCHITECTURE\building</span>
<span class="t" id="k13" style="left:427.30px;top:365.52px;font-size:9px;color:#161616;transform:scaleX(0.8915);">NATURE</span>
<svg class="abs" style="left:0;top:0" width="625" height="470" viewBox="0 0 625 470">
<defs><pattern id="dv" x="0" y="0" width="4" height="14.75" patternUnits="userSpaceOnUse"><rect width="4" height="7.1" fill="#b0b0b0"/><rect y="7.1" width="4" height="7.65" fill="#ebebeb"/></pattern>
<pattern id="dh" x="0" y="0" width="14.76" height="4" patternUnits="userSpaceOnUse"><rect width="7.2" height="4" fill="#e6e6e6"/><rect x="7.2" width="7.56" height="4" fill="#adadad"/></pattern></defs>
<rect x="622.6" y="0" width="2.4" height="470" fill="url(#dv)"/>
<rect x="0" y="467.5" width="625" height="2.5" fill="url(#dh)"/>
</svg>
</body>
</html>
